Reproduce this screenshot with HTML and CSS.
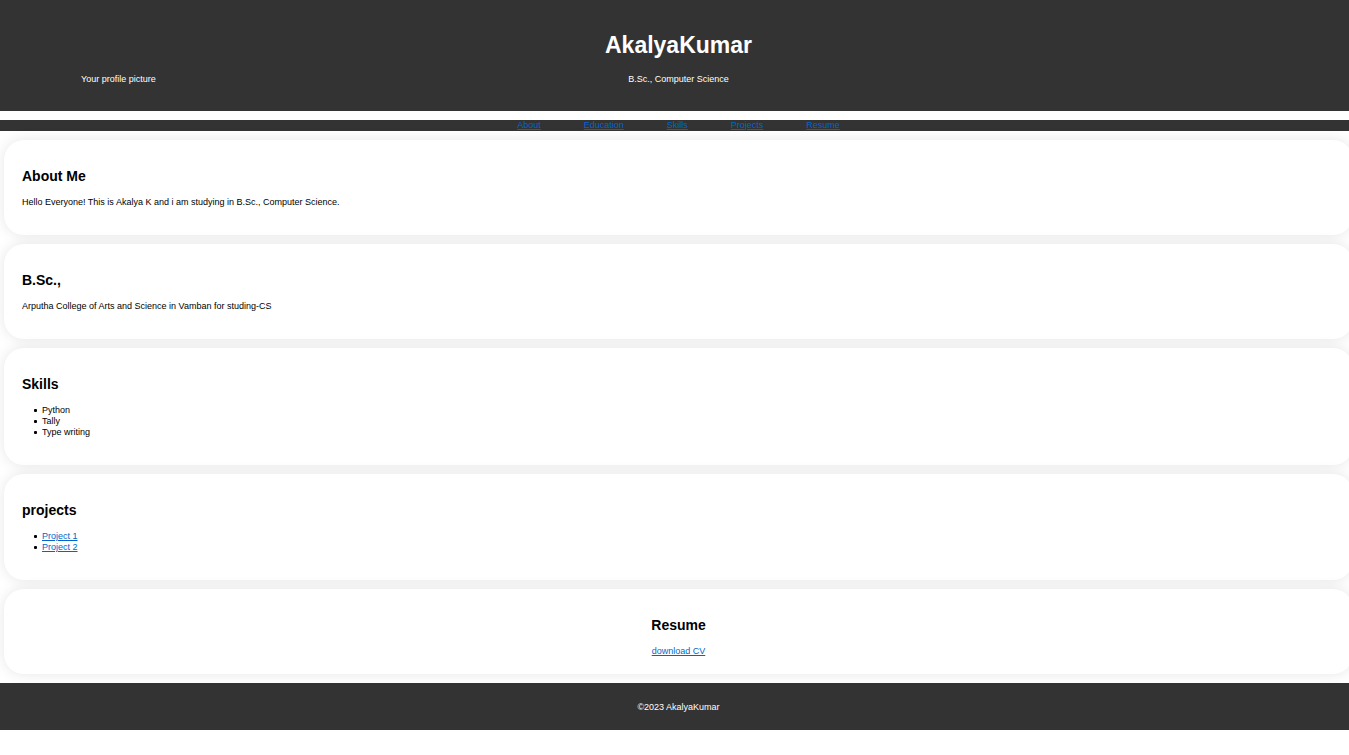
FILE: index.html
```html
<!DOCTYPE html>
<html lang="en">
<head>
<meta charset="utf-8">
<title>AkalyaKumar</title>
<link rel="stylesheet" href="styles.css">
</head>
<body>
<header class="header">
  <div class="profile">Your profile picture</div>
  <div class="identity">
    <h1 class="name">AkalyaKumar</h1>
    <p class="degree">B.Sc., Computer Science</p>
  </div>
</header>
<nav class="nav">
  <a href="#about">About</a>
  <a href="#education">Education</a>
  <a href="#skills">Skills</a>
  <a href="#projects">Projects</a>
  <a href="#resume">Resume</a>
</nav>
<main class="main">
  <section class="card" id="about">
    <h2>About Me</h2>
    <p>Hello Everyone! This is Akalya K and i am studying in B.Sc., Computer Science.</p>
  </section>
  <section class="card" id="education">
    <h2>B.Sc.,</h2>
    <p>Arputha College of Arts and Science in Vamban for studing-CS</p>
  </section>
  <section class="card" id="skills">
    <h2>Skills</h2>
    <ul>
      <li>Python</li>
      <li>Tally</li>
      <li>Type writing</li>
    </ul>
  </section>
  <section class="card" id="projects">
    <h2>projects</h2>
    <ul>
      <li><a href="#project-1">Project 1</a></li>
      <li><a href="#project-2">Project 2</a></li>
    </ul>
  </section>
  <section class="card card-center" id="resume">
    <h2>Resume</h2>
    <a href="#cv">download CV</a>
  </section>
</main>
<footer class="footer">©2023 AkalyaKumar</footer>
</body>
</html>
```
FILE: styles.css
```css
* {
  box-sizing: border-box;
}

body {
  margin: 0;
  overflow-x: hidden;
  background: #fff;
  color: #000;
  font-family: "Liberation Sans", Arial, sans-serif;
  font-size: 9px;
  line-height: 11px;
}

a {
  color: #0066cc;
}

.header {
  display: grid;
  grid-template-columns: 1fr auto 1fr;
  align-items: end;
  padding: 30px 0 26px 8px;
  background: #333;
  color: #fff;
}

.profile {
  padding-left: 73px;
}

.identity {
  text-align: center;
}

.name {
  margin: 0 0 14px;
  font-size: 23px;
  line-height: 30px;
}

.degree {
  margin: 0;
}

.nav {
  display: flex;
  justify-content: center;
  gap: 43px;
  margin: 9px 0;
  padding-left: 8px;
  background: #333;
}

.main {
  display: grid;
  gap: 9px;
  margin: 0 -4px 9px 4px;
}

.card {
  padding: 18px 18px 17px;
  border-radius: 20px;
  background: #fff;
  box-shadow: 0 0 14px rgba(0, 0, 0, 0.1);
}

.card h2 {
  margin: 10px 0 13px;
  font-size: 14px;
  line-height: 16px;
}

.card p {
  margin: 0 0 10px;
}

.card ul {
  margin: 0 0 10px;
  padding-left: 12px;
  list-style: none;
}

.card li {
  display: flex;
  align-items: center;
  gap: 5px;
}

.card li::before {
  content: "";
  width: 3px;
  height: 3px;
  border-radius: 1px;
  background: #000;
}

.card-center {
  text-align: center;
}

.footer {
  padding: 19px 0 17px 8px;
  background: #333;
  color: #fff;
  text-align: center;
}
```
